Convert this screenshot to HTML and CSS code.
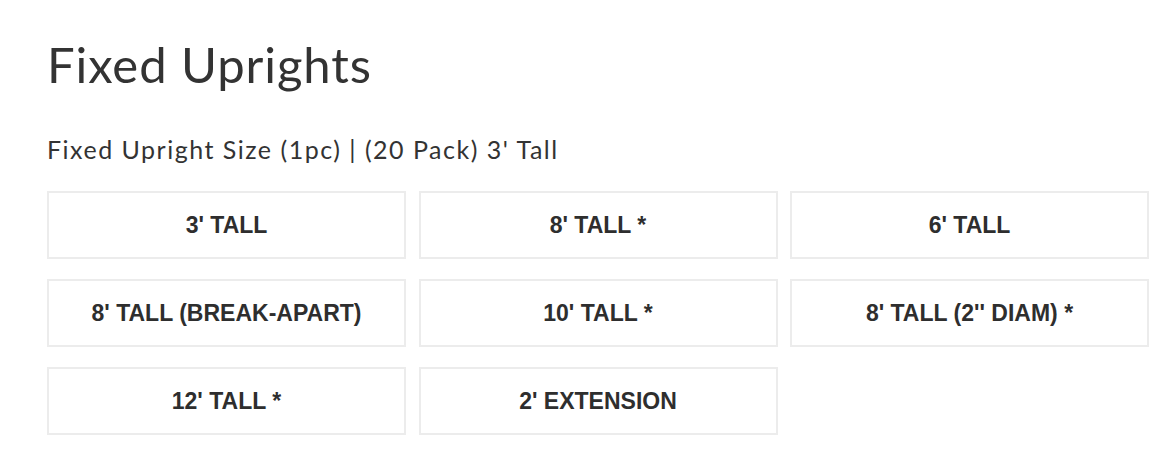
FILE: index.html
```html
<!DOCTYPE html>
<html lang="en">
<head>
  <meta charset="UTF-8">
  <meta name="viewport" content="width=device-width, initial-scale=1.0">
  <title>Fixed Uprights</title>
  <link rel="stylesheet" href="styles.css">
</head>
<body>
  <div class="container">
    <h1>Fixed Uprights</h1>

    <!-- Size options -->
    <p class="option-label">Fixed Upright Size (1pc) | (20 Pack) 3' Tall</p>
    <div class="options">
      <button class="option">3' TALL</button>
      <button class="option">8' TALL *</button>
      <button class="option">6' TALL</button>
      <button class="option">8' TALL (BREAK-APART)</button>
      <button class="option">10' TALL *</button>
      <button class="option">8' TALL (2'' DIAM) *</button>
      <button class="option">12' TALL *</button>
      <button class="option">2' EXTENSION</button>
    </div>
  </div>
</body>
</html>
```

FILE: styles.css
```css
body { margin: 0; background: #fff; color: #333; font-family: Lato, "Liberation Sans", sans-serif; }
.container { padding: 34px 24px 0 47px; }
h1 { font-size: 49px; font-weight: 400; margin: 0 0 40px; line-height: 60px; letter-spacing: 0.9px; }
.option-label { font-size: 25px; margin: 0 0 27px; line-height: 30px; letter-spacing: 1.5px; }
.options { display: grid; grid-template-columns: repeat(3, 359px); column-gap: 12.5px; row-gap: 20px; }
.option {
  height: 68px; background: #fff; border: 2px solid #ececec; color: #2e2e2e;
  font-family: "Liberation Sans", Arial, sans-serif; font-weight: 700; font-size: 23px;
  cursor: pointer;
}
.option:hover { border-color: #ccc; }
```
